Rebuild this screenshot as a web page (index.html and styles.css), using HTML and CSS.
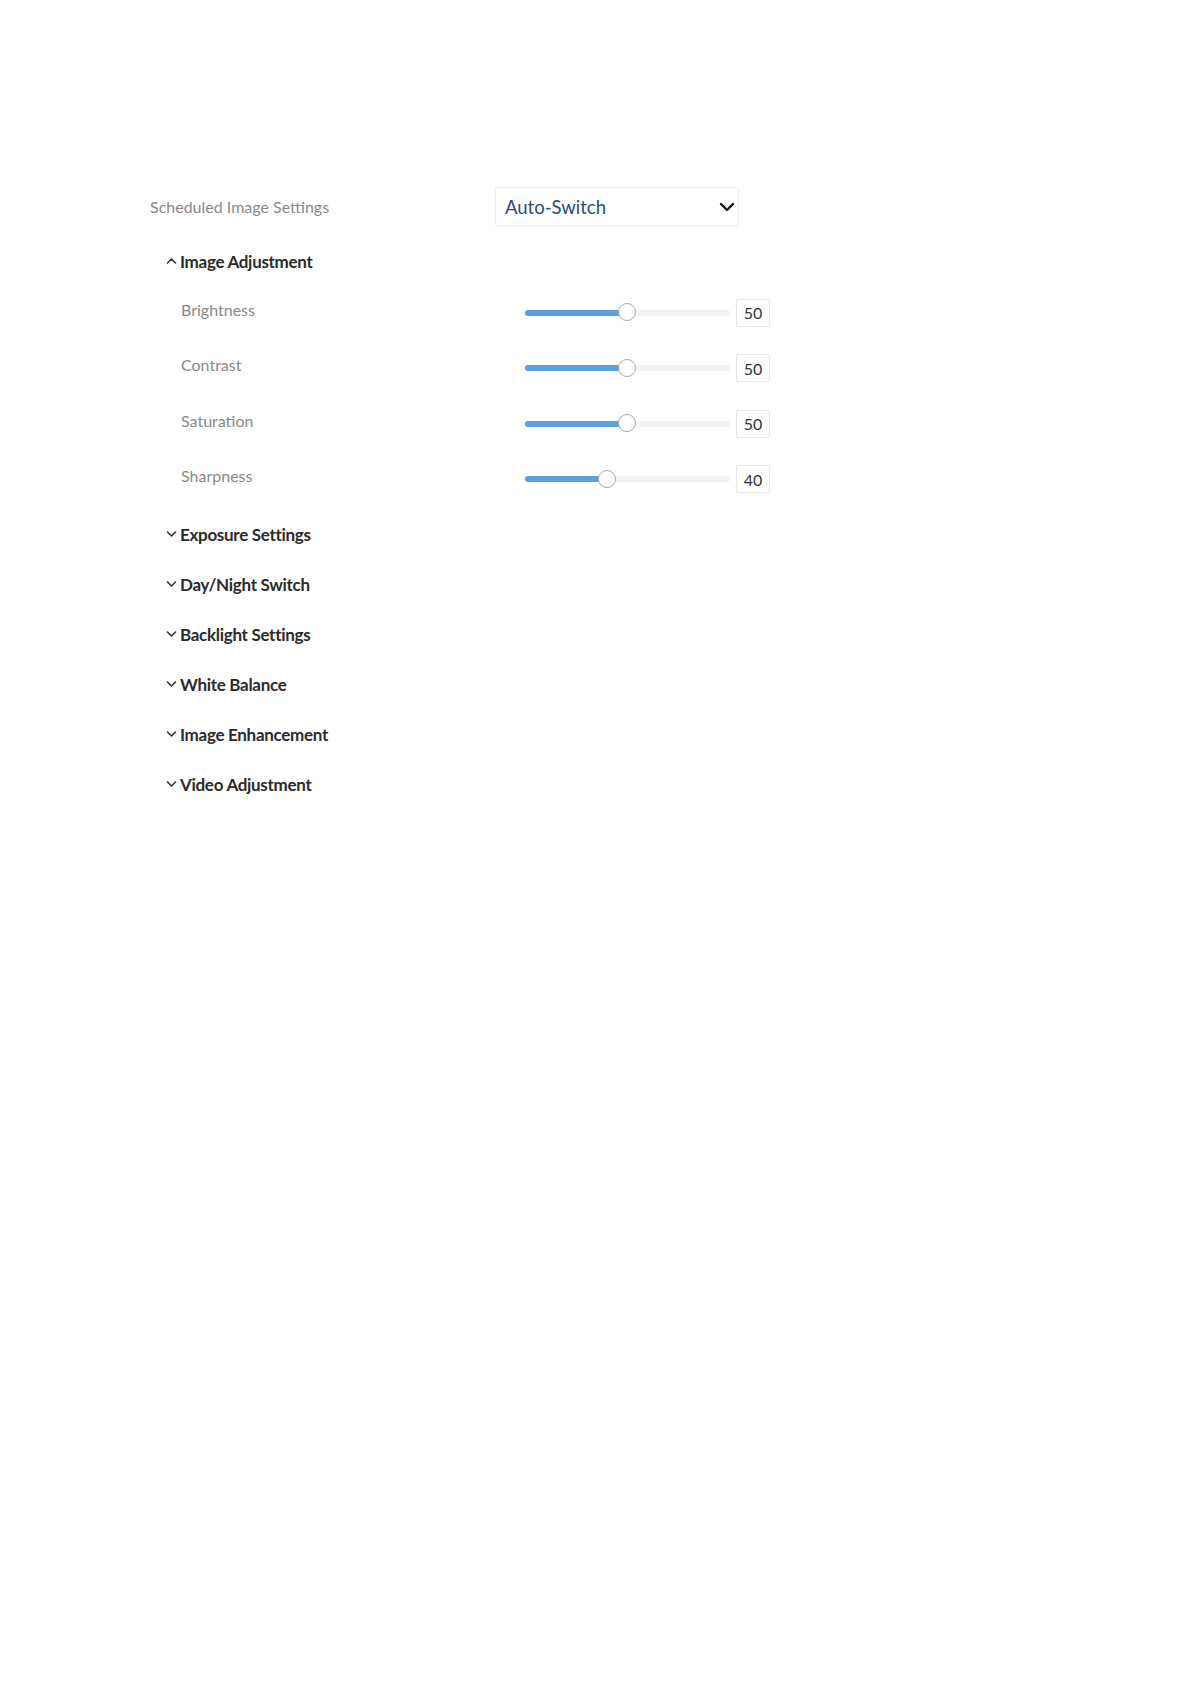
FILE: index.html
```html
<!DOCTYPE html>
<html>
<head>
<meta charset="utf-8">
<link rel="stylesheet" href="styles.css">
</head>
<body>
<div class="settings">
  <div class="top-row">
    <div class="top-label">Scheduled Image Settings</div>
    <div class="select">
      <span class="select-value">Auto-Switch</span>
      <svg class="select-arrow" width="16" height="10" viewBox="0 0 16 10"><path d="M2 2 L8 8 L14 2" fill="none" stroke="#111" stroke-width="2.4" stroke-linecap="round" stroke-linejoin="round"/></svg>
    </div>
  </div>

  <div class="section open">
    <div class="section-head">
      <svg class="caret" width="11" height="8" viewBox="0 0 11 8"><path d="M1.5 6 L5.5 2 L9.5 6" fill="none" stroke="#333" stroke-width="1.6" stroke-linecap="round" stroke-linejoin="round"/></svg>
      <span>Image Adjustment</span>
    </div>
    <div class="slider-row">
      <div class="slider-label">Brightness</div>
      <div class="track"><div class="fill" style="width:50%"></div><div class="thumb" style="left:50%"></div></div>
      <div class="value">50</div>
    </div>
    <div class="slider-row">
      <div class="slider-label">Contrast</div>
      <div class="track"><div class="fill" style="width:50%"></div><div class="thumb" style="left:50%"></div></div>
      <div class="value">50</div>
    </div>
    <div class="slider-row">
      <div class="slider-label">Saturation</div>
      <div class="track"><div class="fill" style="width:50%"></div><div class="thumb" style="left:50%"></div></div>
      <div class="value">50</div>
    </div>
    <div class="slider-row">
      <div class="slider-label">Sharpness</div>
      <div class="track"><div class="fill" style="width:40%"></div><div class="thumb" style="left:40%"></div></div>
      <div class="value">40</div>
    </div>
  </div>

  <div class="section collapsed">
    <div class="section-head"><svg class="caret" width="11" height="8" viewBox="0 0 11 8"><path d="M1.5 2 L5.5 6 L9.5 2" fill="none" stroke="#333" stroke-width="1.6" stroke-linecap="round" stroke-linejoin="round"/></svg><span>Exposure Settings</span></div>
  </div>
  <div class="section collapsed">
    <div class="section-head"><svg class="caret" width="11" height="8" viewBox="0 0 11 8"><path d="M1.5 2 L5.5 6 L9.5 2" fill="none" stroke="#333" stroke-width="1.6" stroke-linecap="round" stroke-linejoin="round"/></svg><span>Day/Night Switch</span></div>
  </div>
  <div class="section collapsed">
    <div class="section-head"><svg class="caret" width="11" height="8" viewBox="0 0 11 8"><path d="M1.5 2 L5.5 6 L9.5 2" fill="none" stroke="#333" stroke-width="1.6" stroke-linecap="round" stroke-linejoin="round"/></svg><span>Backlight Settings</span></div>
  </div>
  <div class="section collapsed">
    <div class="section-head"><svg class="caret" width="11" height="8" viewBox="0 0 11 8"><path d="M1.5 2 L5.5 6 L9.5 2" fill="none" stroke="#333" stroke-width="1.6" stroke-linecap="round" stroke-linejoin="round"/></svg><span>White Balance</span></div>
  </div>
  <div class="section collapsed">
    <div class="section-head"><svg class="caret" width="11" height="8" viewBox="0 0 11 8"><path d="M1.5 2 L5.5 6 L9.5 2" fill="none" stroke="#333" stroke-width="1.6" stroke-linecap="round" stroke-linejoin="round"/></svg><span>Image Enhancement</span></div>
  </div>
  <div class="section collapsed">
    <div class="section-head"><svg class="caret" width="11" height="8" viewBox="0 0 11 8"><path d="M1.5 2 L5.5 6 L9.5 2" fill="none" stroke="#333" stroke-width="1.6" stroke-linecap="round" stroke-linejoin="round"/></svg><span>Video Adjustment</span></div>
  </div>
</div>
</body>
</html>
```

FILE: styles.css
```css
html, body {
  margin: 0;
  padding: 0;
  background: #ffffff;
}

body {
  font-family: Lato, "Open Sans", "Liberation Sans", sans-serif;
  width: 1190px;
  height: 1684px;
}

.settings {
  padding: 187px 0 0 150px;
}

.top-row {
  display: flex;
  align-items: center;
  height: 39px;
}

.top-label {
  width: 345px;
  font-size: 16px;
  color: #8a8a8a;
}

.select {
  box-sizing: border-box;
  width: 244px;
  height: 39px;
  border: 1px solid #ececec;
  border-radius: 3px;
  box-shadow: 0 1px 2px rgba(0, 0, 0, 0.05);
  display: flex;
  align-items: center;
  justify-content: space-between;
  padding: 0 3px 0 9px;
}

.select-value {
  font-size: 18.5px;
  color: #2a4a7c;
}

.select-arrow {
  display: block;
}

.section-head {
  display: flex;
  align-items: center;
  height: 30px;
  padding-left: 16px;
  font-weight: 700;
  font-size: 17px;
  color: #2b2b2b;
  letter-spacing: -0.3px;
}

.caret {
  display: block;
  margin-right: 3px;
  margin-top: -1px;
}

.section.open {
  margin-top: 20px;
}

.section.open .section-head {
  margin-bottom: 9px;
}

.section.collapsed {
  margin-top: 20px;
}

.section.open + .section.collapsed {
  margin-top: 12.5px;
}

.slider-row {
  display: flex;
  align-items: center;
  height: 55.5px;
  padding-left: 31px;
}

.slider-label {
  width: 344px;
  font-size: 16px;
  color: #8a8a8a;
  margin-top: -7px;
}

.track {
  position: relative;
  width: 205px;
  height: 6px;
  border-radius: 3px;
  background: #f1f3f5;
}

.fill {
  height: 6px;
  border-radius: 3px;
  background: #5b9ee2;
}

.thumb {
  position: absolute;
  top: 50%;
  width: 16px;
  height: 16px;
  margin: -9.5px 0 0 -9.5px;
  border: 1.5px solid #a9a9a9;
  border-radius: 50%;
  background: #ffffff;
}

.value {
  box-sizing: border-box;
  margin-left: 6px;
  width: 34px;
  height: 28px;
  border: 1px solid #e6e6e6;
  border-radius: 2px;
  display: flex;
  align-items: center;
  justify-content: center;
  font-size: 16px;
  color: #333333;
}
```
